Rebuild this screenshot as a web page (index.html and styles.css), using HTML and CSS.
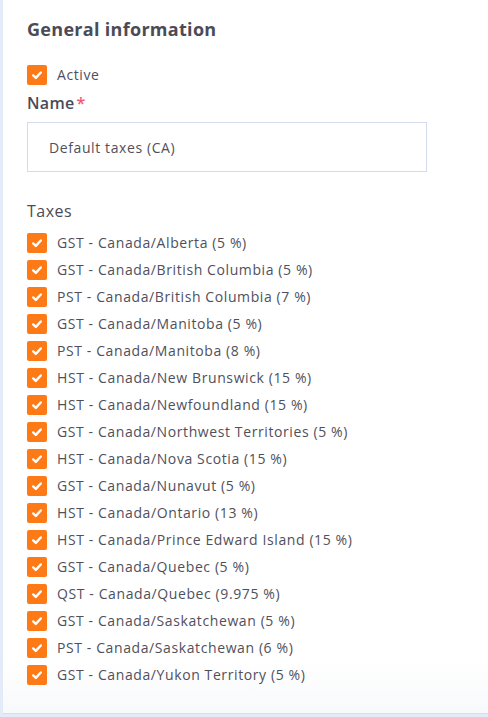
FILE: index.html
```html
<!DOCTYPE html>
<html lang="en">
<head>
    <meta charset="UTF-8">
    <title>Tax group</title>
    <link rel="stylesheet" href="styles.css">
</head>
<body>
    <div id="panel">
        <h2 class="title">General information</h2>
        <label class="check active-row">
            <span class="box"><svg viewBox="0 0 20 20"><path d="M6.2 10.4l2.6 2.5 5-5.4" /></svg></span>
            <span>Active</span>
        </label>
        <div class="field">
            <label class="field-label">Name<span class="req">*</span></label>
            <input type="text" class="text-input" value="Default taxes (CA)">
        </div>
        <div class="field taxes">
            <label class="field-label">Taxes</label>
            <div id="taxList" class="tax-list"></div>
        </div>
    </div>

<script>
    var taxes = [
        "GST - Canada/Alberta (5 %)",
        "GST - Canada/British Columbia (5 %)",
        "PST - Canada/British Columbia (7 %)",
        "GST - Canada/Manitoba (5 %)",
        "PST - Canada/Manitoba (8 %)",
        "HST - Canada/New Brunswick (15 %)",
        "HST - Canada/Newfoundland (15 %)",
        "GST - Canada/Northwest Territories (5 %)",
        "HST - Canada/Nova Scotia (15 %)",
        "GST - Canada/Nunavut (5 %)",
        "HST - Canada/Ontario (13 %)",
        "HST - Canada/Prince Edward Island (15 %)",
        "GST - Canada/Quebec (5 %)",
        "QST - Canada/Quebec (9.975 %)",
        "GST - Canada/Saskatchewan (5 %)",
        "PST - Canada/Saskatchewan (6 %)",
        "GST - Canada/Yukon Territory (5 %)"
    ];
    var list = document.getElementById("taxList");
    for (var i = 0; i < taxes.length; i++) {
        var row = document.createElement("label");
        row.className = "check";
        row.innerHTML = '<span class="box"><svg viewBox="0 0 20 20"><path d="M6.2 10.4l2.6 2.5 5-5.4" /></svg></span>'
            + "<span>" + taxes[i] + "</span>";
        list.appendChild(row);
    }
</script>
</body>
</html>
```

FILE: styles.css
```css
body {
    margin: 0;
    background: #e4ebf8;
    font-family: "Open Sans", Lato, sans-serif;
    color: #50505c;
}
#panel {
    margin-left: 3px;
    height: 714px;
    box-sizing: border-box;
    padding: 16px 24px 0;
    background: linear-gradient(#fff 660px, #f8f9fb);
    border-bottom: 1px solid #d6deec;
}
.title {
    margin: 0 0 19px;
    font-size: 18px;
    font-weight: 700;
    line-height: 26px;
    letter-spacing: 0.3px;
    color: #4b4b57;
}
.check {
    display: flex;
    align-items: center;
    gap: 10px;
    height: 27px;
    font-size: 14px;
    letter-spacing: 0.6px;
    .box {
        width: 20px;
        height: 20px;
        border-radius: 2px;
        background: #fd7a17;
        display: flex;
    }
    svg {
        width: 20px;
        height: 20px;
        fill: none;
        stroke: #fff;
        stroke-width: 2.4;
        stroke-linecap: round;
        stroke-linejoin: round;
    }
}
.active-row {
    margin-bottom: 5px;
}
.field-label {
    display: block;
    font-size: 16px;
    font-weight: 600;
    line-height: 20px;
    letter-spacing: 0.3px;
    color: #4b4b57;
    .req {
        color: #f25a6a;
        margin-left: 2px;
    }
}
.text-input {
    display: block;
    margin-top: 9px;
    width: 400px;
    height: 50px;
    box-sizing: border-box;
    border: 1px solid #d3dced;
    padding: 0 21px;
    font-family: inherit;
    font-size: 14px;
    letter-spacing: 0.6px;
    color: #50505c;
    outline: none;
}
.taxes {
    margin-top: 29px;
    .field-label {
        font-weight: 500;
        letter-spacing: 0.5px;
        margin-bottom: 8px;
    }
}
```
